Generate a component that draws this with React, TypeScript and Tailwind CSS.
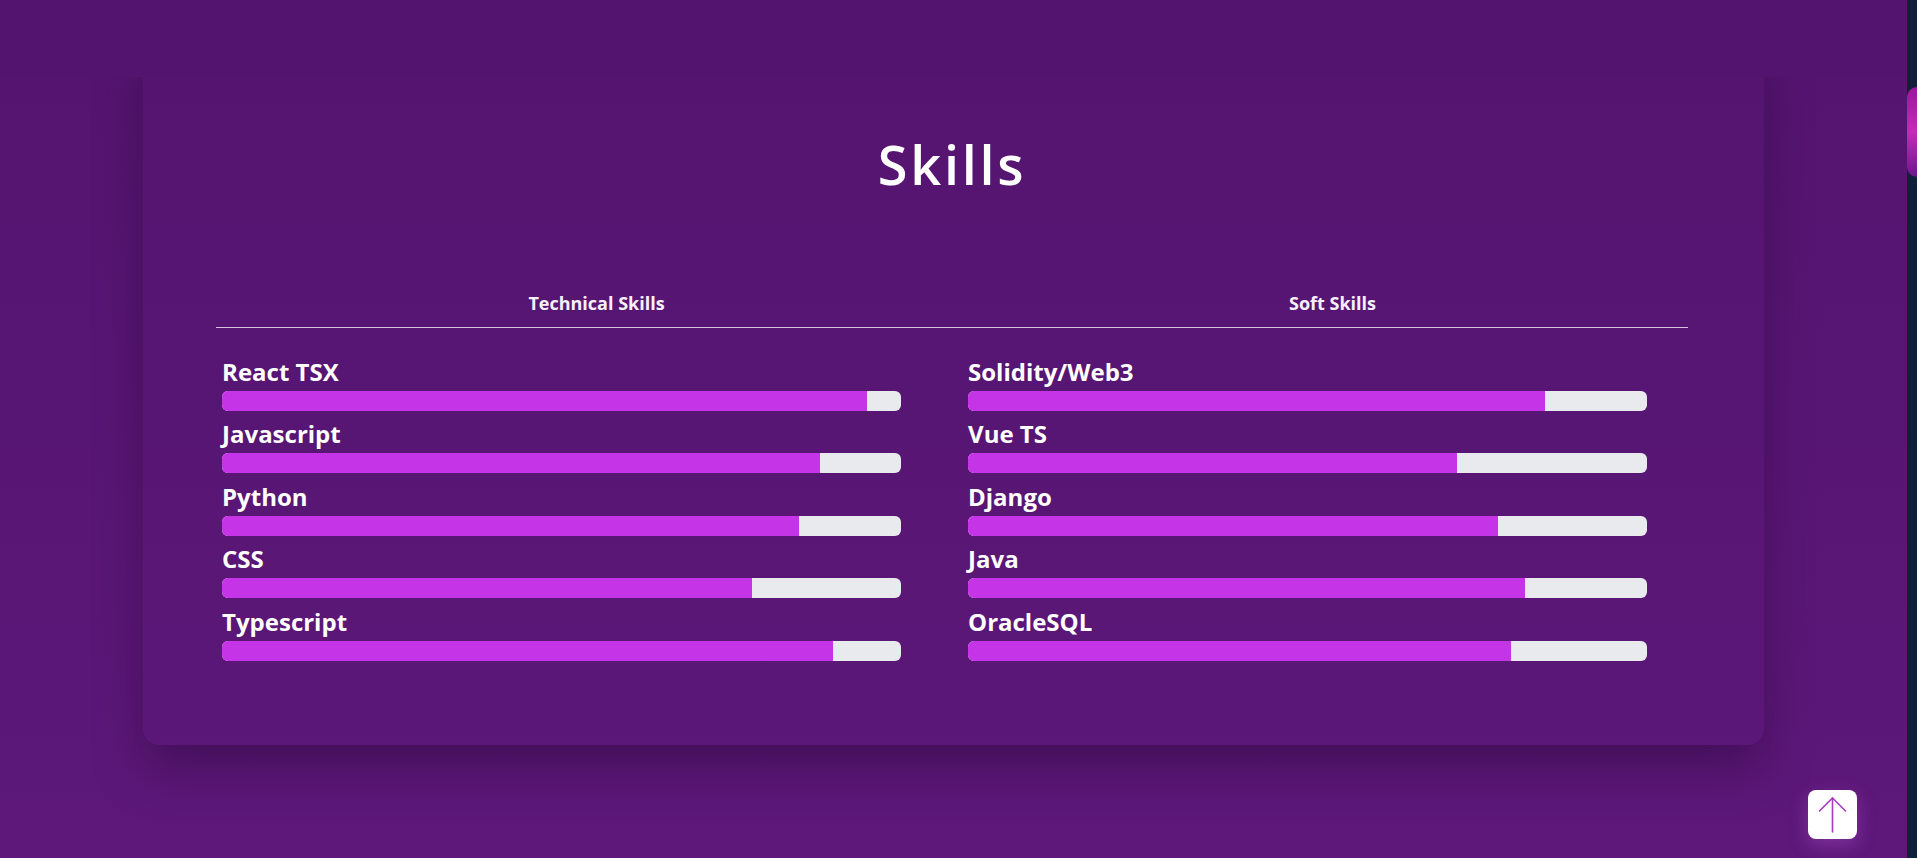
type Skill = {
  name: string
  level: number
}

const technical: Skill[] = [
  { name: 'React TSX', level: 95 },
  { name: 'Javascript', level: 88 },
  { name: 'Python', level: 85 },
  { name: 'CSS', level: 78 },
  { name: 'Typescript', level: 90 },
]

const soft: Skill[] = [
  { name: 'Solidity/Web3', level: 85 },
  { name: 'Vue TS', level: 72 },
  { name: 'Django', level: 78 },
  { name: 'Java', level: 82 },
  { name: 'OracleSQL', level: 80 },
]

const SkillBar = ({ skill }: { skill: Skill }) => {
  return (
    <div className="flex flex-col w-[679px]">
      <p className="text-[24px] leading-[29px] font-bold text-white mb-[5px]">
        {skill.name}
      </p>
      <div className="h-5 w-full rounded-md bg-[#e8eaee] overflow-hidden">
        <div
          className="h-full bg-[#c634e8]"
          style={{ width: `${skill.level}%` }}
        />
      </div>
    </div>
  )
}

const SkillColumn = ({ skills }: { skills: Skill[] }) => {
  return (
    <div className="flex flex-col gap-[8.4px]">
      {skills.map((s) => (
        <SkillBar key={s.name} skill={s} />
      ))}
    </div>
  )
}

export default function App() {
  return (
    <div
      className="flex h-[858px] w-full overflow-hidden"
      style={{ fontFamily: '"Open Sans", "Noto Sans", sans-serif' }}
    >
      <div className="relative flex-1 flex flex-col bg-gradient-to-b from-[#53146f] to-[#5d1879]">
        <div className="relative z-10 h-[77px] bg-[#53146f]" />
        <section className="-mt-[37px] mx-auto w-[85%] rounded-2xl shadow-[0_24px_48px_-4px_rgba(40,5,55,0.5)] pt-[97px] pb-[84px] pl-[73px] pr-[76px]">
          <h2 className="text-center text-[54px] leading-none font-semibold tracking-[0.05em] text-white">
            Skills
          </h2>
          <div className="mt-[98px] grid grid-cols-[761px_711px] border-b border-[#d6c4e2] pb-[10px]">
            <h3 className="text-center text-lg font-bold text-[#f7f0fb]">
              Technical Skills
            </h3>
            <h3 className="text-center text-lg font-bold text-[#f7f0fb]">
              Soft Skills
            </h3>
          </div>
          <div className="mt-[29px] grid grid-cols-[746px_1fr] pl-[6px]">
            <SkillColumn skills={technical} />
            <SkillColumn skills={soft} />
          </div>
        </section>
        <button
          type="button"
          className="fixed bottom-[19px] right-[60px] flex h-[49px] w-[49px] items-center justify-center rounded-lg bg-white shadow-[0_6px_18px_rgba(170,80,200,0.45)]"
        >
          <svg
            viewBox="0 0 49 49"
            className="h-[49px] w-[49px]"
            fill="none"
            stroke="#a53abf"
            strokeWidth={1.6}
            strokeLinecap="round"
            strokeLinejoin="round"
          >
            <path d="M24.5 8V42" />
            <path d="M11.5 21L24.5 8L37.5 21" />
          </svg>
        </button>
      </div>
      <div className="w-[10px] bg-[#10203a] pt-[87px]">
        <div className="h-[90px] w-full rounded-l-full bg-gradient-to-b from-[#9a169d] via-[#c52bb8] to-[#6c168e]" />
      </div>
    </div>
  )
}
